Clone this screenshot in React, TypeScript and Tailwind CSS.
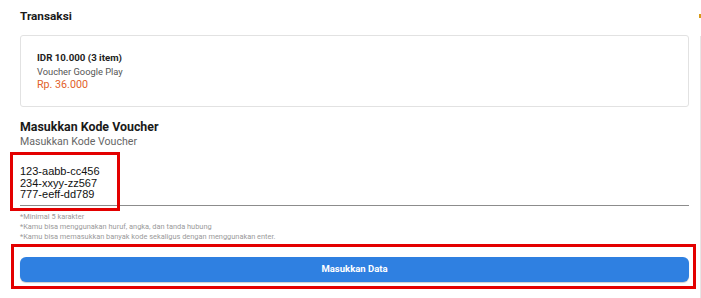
const helpers = [
  "*Minimal 5 karakter",
  "*Kamu bisa menggunakan huruf, angka, dan tanda hubung",
  "*Kamu bisa memasukkan banyak kode sekaligus dengan menggunakan enter.",
];

export default function App() {
  return (
    <div className="relative w-[701px] h-[298px] overflow-hidden bg-white font-['Roboto',sans-serif] text-[#222]">
      <div className="flex flex-col pl-5 pr-3 pt-2">
        <h2 className="text-[11.8px] leading-4 font-bold text-[#1a1a1a]">Transaksi</h2>

        <div className="mt-[11px] flex h-[72px] flex-col rounded-[3px] border border-[#e2e2e2] pl-4 pt-[15px]">
          <p className="text-[9.7px] leading-[14px] font-bold text-[#222]">IDR 10.000 (3 item)</p>
          <p className="text-[9.3px] leading-[13px] text-[#555]">Voucher Google Play</p>
          <p className="text-[10.7px] leading-[14px] text-[#e25f2a]">Rp. 36.000</p>
        </div>

        <h2 className="mt-3 text-[12.4px] leading-4 font-bold text-[#1a1a1a]">Masukkan Kode Voucher</h2>
        <p className="text-[10.6px] leading-[14px] text-[#666]">Masukkan Kode Voucher</p>

        <textarea
          readOnly
          defaultValue={"123-aabb-cc456\n234-xxyy-zz567\n777-eeff-dd789"}
          className="block h-[57px] w-full resize-none overflow-hidden border-0 border-b border-[#8c8c8c] p-0 pt-[17px] font-['Liberation_Sans',Arial,sans-serif] text-[11px] leading-[11.7px] text-[#111] outline-none"
        />

        <div className="mt-[6px] flex flex-col">
          {helpers.map((h) => (
            <p key={h} className="text-[7.4px] leading-[10px] text-[#9a9a9a]">
              {h}
            </p>
          ))}
        </div>

        <button
          type="button"
          className="mt-[15px] h-[25px] w-full rounded-[6px] bg-[#2f80e1] text-[9.5px] font-bold text-white shadow-[0_1px_1px_rgba(0,0,0,0.2)]"
        >
          Masukkan Data
        </button>
      </div>

      {/* right edge of neighbouring panel */}
      <div className="absolute right-0 top-[36px] bottom-0 w-px bg-[#e6e6e6]" />
      <div className="absolute right-0 top-[14px] h-[4px] w-[2px] bg-[#d89a18]" />

      {/* red annotation boxes */}
      <div className="absolute left-[10px] top-[152px] h-[59px] w-[110px] border-[3px] border-[#e30000]" />
      <div className="absolute left-[11px] top-[244px] h-[45px] w-[685px] border-[3px] border-[#e30000]" />
    </div>
  );
}
